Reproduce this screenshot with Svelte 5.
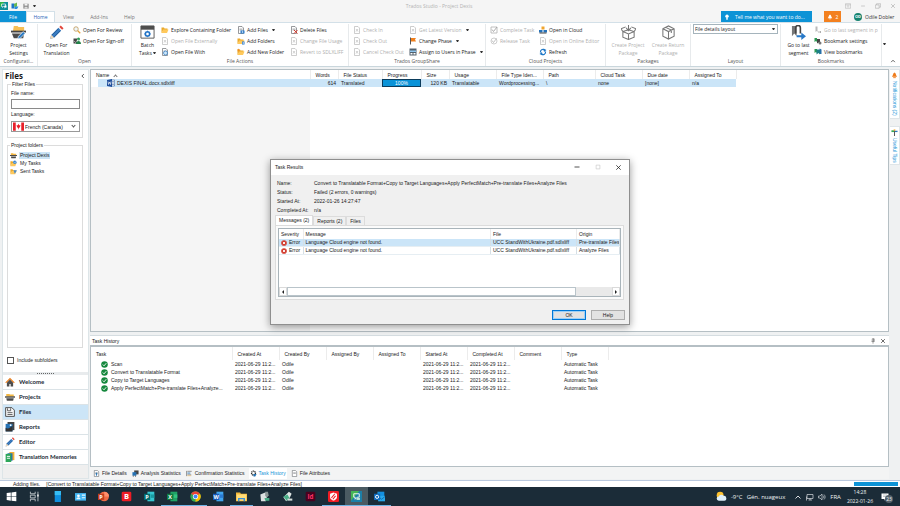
<script lang="ts">
    interface Cmd { icon: string, label: string, off?: boolean, caret?: boolean }
    interface Group { name: string, width: number, big?: Cmd[], cols?: { width: number, items: Cmd[] }[], layout?: boolean }

    const doc = '<path d="M3 1h7l3 3v11H3z" fill="#fff" stroke="#6b6f72" stroke-width="1.4"/><path d="M5 6h6M5 8h6" stroke="#6b6f72"/>';
    const greyDoc = '<path d="M3 1h7l3 3v11H3z" fill="#fff" stroke="#a9a9a9" stroke-width="1.4"/><path d="M6 6l4 5M10 6l-4 5" stroke="#a9a9a9" stroke-width="1.3"/>';
    const folder = '<path d="M1 3h5l1 2h6v3H5l-4 6z" fill="#e9a92c"/><path d="M4 7h11l-3 7H1z" fill="#ffc95c"/>';
    const office = (dark: string, mid: string, light: string, ch: string) =>
        `<path d="M5 1h10v14H5z" fill="${light}"/><path d="M10 5h5v5h-5z" fill="${mid}"/><path d="M0 4h9v9H0z" fill="${dark}"/><text x="4.5" y="11.4" font-size="8" font-weight="700" text-anchor="middle" fill="#fff">${ch}</text>`;
    const tile = (bg: string, fg: string, ch: string, size: number) =>
        `<rect x="1" y="1" width="14" height="14" rx="2" fill="${bg}"/><text x="8" y="12" font-size="${size}" font-weight="700" text-anchor="middle" fill="${fg}">${ch}</text>`;

    const icons: Record<string, string> = {
        app: '<path d="M0 0h16v16H0z" fill="#0f8f9a"/><path d="M0 0h9L0 11z" fill="#2db34a"/><path d="M3 4h8v5H7l-2 2V9H3z" fill="none" stroke="#fff" stroke-width="1.3"/><path d="M9 7h4v4h-2l-2 2z" fill="#fff"/>',
        open: '<path d="M1 3h6v10H1z" fill="#1c75c8"/><path d="M6 4l6-3v8l-5 2z" fill="#68b84d"/><path d="M8 9h7l-3 5H7z" fill="#2a8fe0"/>',
        save: '<path d="M1 2h14v13H1z" fill="#888"/><path d="M4 2h8v5H4z" fill="#f5f5f5"/><path d="M4 10h8v5H4z" fill="#ddd"/>',
        settings: '<path d="M3 1h4l1 1h6v5H2z" fill="#f7bf55"/><path d="M0 6h16v2H0z" fill="#444"/><path d="M1 9h13l-1 5H3z" fill="#4b4b4b"/><path d="M7 15l1-3 5-5 2 2-5 5z" fill="#2d7cc4" stroke="#fff" stroke-width=".7"/>',
        pencil: '<path d="M1 15l1.5-4.5L10 3l3 3-7.5 7.5z" fill="#3b7fc4"/><path d="M3 11l7-7M5 13l7-7" stroke="#1f4f86" stroke-width=".8"/><path d="M11 2l1.5-1.5 3 3L14 5z" fill="#e2473c"/><path d="M1 15l1.5-4.5 3 3z" fill="#f0d8b8"/>',
        batch: '<path d="M1 1h14v13H1z" fill="#fff" stroke="#555"/><path d="M1 1h14v4H1z" fill="#4e4e4e"/><circle cx="8" cy="9.500" r="2.3" fill="none" stroke="#2374c6" stroke-width="1.700"/><path d="M8 6v7M4.500 9.500h7M5.700 7.200l4.600 4.600M10.300 7.200l-4.600 4.600" stroke="#2374c6" stroke-width=".8"/><circle cx="8" cy="9.500" r="1.300" fill="#fff"/>',
        search: '<circle cx="6" cy="6" r="4.500" fill="#eef6fb" stroke="#b98b3f" stroke-width="1.400"/><path d="M9.500 9.500l5 5" stroke="#e2a23a" stroke-width="2.500"/>',
        signoff: '<path d="M1 3h7v10H1z" fill="#444"/><circle cx="11" cy="4" r="3" fill="#2c9a54"/><path d="M6 14c0-8 10-8 10 0z" fill="#24824a"/><path d="M2 8l3 3 5-6" fill="none" stroke="#fff"/>',
        folder,
        greyDoc,
        doc,
        docWith: doc + '<circle cx="9" cy="10" r="4" fill="#cfe6f7" stroke="#2879c4" stroke-width="1.400"/>',
        addFiles: doc + '<path d="M7 9h8v6H7z" fill="#2374c6"/><path d="M11 10v4M9 12h4" stroke="#fff"/>',
        addFolder: folder + '<path d="M10 9h5v6h-5z" fill="#2374c6"/><path d="M12.500 10v4M11 12h3" stroke="#fff"/>',
        folderNew: folder + '<path d="M3 1l1 2 2 0-1.500 1.500L5 7 3 5.500 1 7l.5-2.500L0 3h2z" fill="#f08b1f"/>',
        docDel: doc + '<path d="M8 8l7 7M15 8l-7 7" stroke="#d33a2c" stroke-width="2"/>',
        flag: '<path d="M3 1v14" stroke="#555" stroke-width="2"/><path d="M4 2h10l-2 3 2 4H4z" fill="#f07f1c"/>',
        assign: '<path d="M1 1h14v14H1z" fill="#52616d"/><path d="M2 5h12v3H2z" fill="#8fc6ee"/><path d="M3 10h4v3H3zM9 10h4v3H9z" fill="#fff"/>',
        tick: '<path d="M2 2h12v12H2z" fill="none" stroke="#999" stroke-width="1.500"/><path d="M4 7l3 4 7-9" fill="none" stroke="#888" stroke-width="1.700"/>',
        release: '<circle cx="8" cy="8" r="6" fill="none" stroke="#aaa" stroke-width="1.400"/><path d="M4 7l3 4 6-8" fill="none" stroke="#999" stroke-width="1.500"/>',
        cloud: '<path d="M5 1h6v6H5z" fill="#f0a52e"/><path d="M0 8h7v5H0zM9 8h7v5H9z" fill="#2572ba"/><path d="M1 14h14" stroke="#444" stroke-width="2"/>',
        refresh: '<path d="M3 9a5 5 0 0 1 8-5M13 7a5 5 0 0 1-8 5" fill="none" stroke="#1f78c8" stroke-width="2.400"/><path d="M9 1l6 3-5 4zM7 15l-6-3 5-4z" fill="#1f78c8"/>',
        boxDown: '<path d="M2 7l6-2 6 2v6l-6 2.500L2 13zM2 7l6 2.500L14 7M8 9.500v6M8 0v5M5.500 3L8 6l2.500-3M2 7L0 4l5-2M14 7l2-3-5-2" fill="none" stroke="#555" stroke-width="1.100"/>',
        box: '<path d="M2 4l6-3 6 3v8l-6 3-6-3zM2 4l6 3 6-3M8 7v8M5 2.500l6 3v3" fill="none" stroke="#555" stroke-width="1.100"/>',
        goLast: '<path d="M1 1h5v11l-2.500-3L1 12z" fill="#777"/><path d="M5 9V3a2.500 2.500 0 0 1 5 0v6" fill="none" stroke="#444" stroke-width="1.700"/><path d="M6 11h5V8l5 4-5 4v-3H6z" fill="#2879c8"/>',
        bmGrey: '<path d="M3 1h4v11l-2-2-2 2z" fill="#aaa"/><path d="M8 12h6M12 10l2 2-2 2" stroke="#888" fill="none" stroke-width="1.500"/>',
        bmSet: '<path d="M1 2h5v8l-2-2-3 2z" fill="#2c9a54"/><path d="M6 4h6v9l-3-2-3 2z" fill="#444"/><circle cx="12" cy="12" r="3" fill="#777"/>',
        bmView: '<path d="M1 2h5v8l-2-2-3 2z" fill="#2c9a54"/><path d="M5 3h7v10l-3-3-4 3z" fill="#1e8086"/><path d="M11 1l4 2v9h-3z" fill="#2870a8"/>',
        bell: '<path d="M8 1c4 2 3 7 6 10H2C5 8 4 3 8 1z" fill="#fff"/><path d="M6 12h4v2H6z" fill="#fff"/>',
        bellOrange: '<path d="M8 1c4 2 3 7 6 10H2C5 8 4 3 8 1z" fill="#ef7b1a"/><path d="M5 12h6v2H5z" fill="#ef7b1a"/>',
        tips: '<path d="M8 3v13" stroke="#444" stroke-width="2"/><path d="M1 3h6v4H1z" fill="#35a853"/><path d="M9 4h6v3H9z" fill="#2b77bd"/><path d="M6 1h4v3H6z" fill="#f2a82c"/>',
        bulb: '<circle cx="8" cy="6" r="4.500" fill="#fff"/><path d="M6 10h4v5H6z" fill="#fff"/>',
        word: '<path d="M8 2h7v12H8z" fill="#fff" stroke="#2b5797"/><path d="M10 5h4M10 8h4M10 11h4" stroke="#2b5797"/><path d="M0 2l10-2v16L0 14z" fill="#1f4e9c"/><path d="M2 5l1 6 2-5 2 5 1-6" fill="none" stroke="#fff" stroke-width="1.300"/>',
        canada: '<path d="M0 2h16v12H0z" fill="#fff"/><path d="M0 2h4v12H0zM12 2h4v12h-4z" fill="#e8202a"/><path d="M8 4l1 2 2 0-1 3-1.500 1v2h-1v-2L6 9 5 6h2z" fill="#e8202a"/>',
        project: '<path d="M2 3h5l1 1h6v3H2z" fill="#f2b743"/><path d="M0 7h16v2H0z" fill="#333"/><path d="M2 10h12l-1 4H3z" fill="#4a4a4a"/>',
        tasks: folder + '<circle cx="11" cy="5" r="4" fill="#3a86cf"/><path d="M9 5l2 2 3-4" stroke="#fff" fill="none"/>',
        sent: folder + '<path d="M8 5h8l-5 8z" fill="#4c8ccb"/>',
        home: '<path d="M8 1l8 8h-3L8 4 3 9H0z" fill="#ee8322"/><path d="M3 9l5-5 5 5v6H9v-4H7v4H3z" fill="#4d4d4d"/>',
        files: '<path d="M1 1h10l4 4v10H1z" fill="#f5f5f5" stroke="#4a4a4a" stroke-width="1.500"/><path d="M4 2v4h5V2M4 9h8M4 12h8" fill="none" stroke="#4a4a4a" stroke-width="1.300"/>',
        reports: '<path d="M4 0h11v13H4z" fill="#444"/><path d="M1 3h11v12H1z" fill="#2572b4"/><path d="M1 15V9c4 3 7 0 11-3v9z" fill="#333"/><circle cx="9" cy="5" r="1.500" fill="#fff"/>',
        tm: '<path d="M7 0h8v13H7z" fill="#f2b036"/><path d="M4 2h8v12H4z" fill="#2572b4"/><path d="M1 3h9v13H1z" fill="#2da65a"/><path d="M3 7h5M3 10h5" stroke="#fff" stroke-width="1.500"/>',
        ok: '<circle cx="8" cy="8" r="7.500" fill="#16883e"/><path d="M4 8l3 3 5-6" fill="none" stroke="#fff" stroke-width="2"/>',
        error: '<circle cx="8" cy="8" r="7.500" fill="#d23b2e"/><path d="M5 5l6 6M11 5l-6 6" stroke="#fff" stroke-width="2.400"/>',
        info: doc + '<path d="M8 6v7M6 9h4" stroke="#2572b4" stroke-width="2"/>',
        stats: '<path d="M5 1h10v9H5z" fill="#444"/><path d="M1 5h9v8H1z" fill="#2572b4"/><path d="M3 13v2M8 13v2" stroke="#333" stroke-width="2"/>',
        bars: '<path d="M1 2v12" stroke="#666" stroke-width="1.500"/><path d="M3 3h10M3 11h9" stroke="#888" stroke-width="2"/><path d="M3 7h7" stroke="#2572b4" stroke-width="2"/><path d="M3 13h9" stroke="#f2b036"/>',
        gear: '<circle cx="8" cy="7" r="4.500" fill="none" stroke="#333" stroke-width="3" stroke-dasharray="2.500 1"/><path d="M8 9h7l-3 6H8z" fill="#2572b4"/>',
        pin: '<path d="M4 9h8M6 9V2h5v7M8 9v6M9.500 2v7" fill="none" stroke="#555" stroke-width="1.500"/>',
        windows: '<path d="M1 3l6-1v5.500H1zM8 2l7-1v6.500H8zM1 8.500h6V14l-6-1zM8 8.500h7V15l-7-1z" fill="#fff"/>',
        taskview: '<path d="M2 1v3h7V1M2 15v-3h7v3M2 6h7v4H2zM13 1v14" fill="none" stroke="#cfd4d8" stroke-width="1.200"/><path d="M12 5h2v3h-2z" fill="#fff"/>',
        phone: '<path d="M4 0h9v16H4z" fill="#0f8ede"/><path d="M4 0h9v6H4z" fill="#36bdf4"/>',
        card: '<path d="M0 3h16v11H0z" fill="#43b5f2"/><circle cx="5" cy="7" r="2" fill="#fff"/><path d="M2 12c0-4 6-4 6 0zM10 5h5v2h-5zM10 9h5v1.500h-5z" fill="#e9f7ff"/>',
        ppt: '<circle cx="9" cy="8" r="7" fill="#ed6c47"/><path d="M9 1a7 7 0 0 1 7 7H9z" fill="#ff8f6b"/><path d="M0 4h9v9H0z" fill="#c43e1c"/><text x="4.500" y="11.400" font-size="8" font-weight="700" text-anchor="middle" fill="#fff">P</text>',
        bold: tile("#ee1c25", "#fff", "B", 11),
        pub: office("#036c70", "#1a9ba1", "#37c6d0", "P"),
        excel: office("#107c41", "#33c481", "#21a366", "X"),
        chrome: '<circle cx="8" cy="8" r="7.500" fill="#34a853"/><path d="M8 8L1.500 4A7.500 7.500 0 0 1 14.500 4z" fill="#ea4335"/><path d="M8 8l6.500-4A7.500 7.500 0 0 1 8 15.500z" fill="#fbbc05"/><circle cx="8" cy="8" r="3.800" fill="#fff"/><circle cx="8" cy="8" r="2.900" fill="#4285f4"/>',
        wordTb: office("#185abd", "#2b7cd3", "#41a5ee", "W"),
        explorer: '<path d="M0 2h6l1 2h9v11H0z" fill="#f5b93a"/><path d="M1 5h14v9H1z" fill="#ffdd7a"/><path d="M3 10h10v5h-2v-3H5v3H3z" fill="#3a8fd6"/>',
        cleaner: '<path d="M2 5l7-3 4 2-3 11H3z" fill="#dde2e2"/><path d="M9 1l4 0 1 5-3 4-2-4z" fill="#8c9797"/><path d="M8 10h7v4H9z" fill="#48ab84"/>',
        cleaner2: '<path d="M2 9l8-8 4 3-3 6-5 5z" fill="#dfe6e4"/><path d="M2 8l6-3 3 6-4 3z" fill="#49ad86"/><path d="M8 11h7v3H8z" fill="#d3ddda"/>',
        indesign: tile("#49021f", "#ff3366", "Id", 9),
        redShield: '<rect x="0" y="0" width="16" height="16" rx="2" fill="#f01c24"/><path d="M8 2l5 2v5c0 3-5 5-5 5s-5-2-5-5V4z" fill="#fff"/><path d="M5 10l5-6M7 12l4-5" stroke="#f01c24" stroke-width="1.500"/>',
        trados: '<path d="M0 0h16v16H0z" fill="#1b7fa8"/><path d="M0 0h12L0 14z" fill="#45b556"/><path d="M4 4h8v5H9l-3 3V9H4z" fill="none" stroke="#fff" stroke-width="1.300"/><path d="M8 10h5v3H8z" fill="#bfe6d8"/>',
        outlook: '<path d="M5 1h10v8H5z" fill="#1490df"/><path d="M6 7h10v8H6z" fill="#28a8ea"/><path d="M6 8l5 4 5-4" stroke="#0a5a9c" fill="none"/><path d="M0 4h9v9H0z" fill="#0f6cbd"/><circle cx="4.500" cy="8.500" r="2.300" fill="none" stroke="#fff" stroke-width="1.400"/>',
        weather: '<circle cx="6" cy="6" r="5" fill="#fdc22f"/><path d="M4 14a3 3 0 0 1 0-6 4 4 0 0 1 7-1 3.500 3.500 0 0 1 1 7z" fill="#dff0fa"/>',
        monitor: '<path d="M2 3h12v8H2zM5 14h7M8 11v3M1 7v8" fill="none" stroke="#e6eaec" stroke-width="1.300"/>',
        speaker: '<path d="M1 6h3l4-4v12l-4-4H1z" fill="none" stroke="#e6eaec" stroke-width="1.200"/><path d="M10 5c2 2 2 4 0 6M12 3c3 3 3 7 0 10" fill="none" stroke="#e6eaec" stroke-width="1.200"/>',
        chevUp: '<path d="M3 11l5-5 5 5" fill="none" stroke="currentColor" stroke-width="1.800"/>',
        chevLeft: '<path d="M10 3L5 8l5 5" fill="none" stroke="currentColor" stroke-width="2"/>',
        note: '<path d="M1 1h14v11h-5l-3 3v-3H1z" fill="#fff"/><path d="M4 4h8M4 7h8" stroke="#8a949b"/>',
        min: '<path d="M3 8h10" stroke="currentColor" stroke-width="1.500"/>',
        max: '<path d="M3 3h10v10H3z" fill="none" stroke="currentColor" stroke-width="1.500"/>',
        restore: '<path d="M1 5h10v9H1zM4 5V2h11v9h-4" fill="none" stroke="currentColor" stroke-width="1.500"/>',
        ribbonOpt: '<path d="M1 2h14v12H1zM1 5h14M8 12V7M6 9l2-2 2 2" fill="none" stroke="currentColor" stroke-width="1.300"/>',
        close: '<path d="M3 3l10 10M13 3L3 13" stroke="currentColor" stroke-width="1.700"/>',
    };

    const groups: Group[] = [
        { name: "Configurati...", width: 38, big: [{ icon: "settings", label: "Project Settings" }] },
        {
            name: "Open", width: 94, big: [{ icon: "pencil", label: "Open For Translation" }],
            cols: [{ width: 56, items: [{ icon: "search", label: "Open For Review" }, { icon: "signoff", label: "Open For Sign-off" }] }]
        },
        {
            name: "File Actions", width: 217, big: [{ icon: "batch", label: "Batch Tasks", caret: true }],
            cols: [
                { width: 76, items: [{ icon: "folder", label: "Explore Containing Folder" }, { icon: "greyDoc", label: "Open File Externally", off: true }, { icon: "docWith", label: "Open File With" }] },
                { width: 53, items: [{ icon: "addFiles", label: "Add Files", caret: true }, { icon: "addFolder", label: "Add Folders" }, { icon: "folderNew", label: "Add New Folder" }] },
                { width: 56, items: [{ icon: "docDel", label: "Delete Files" }, { icon: "greyDoc", label: "Change File Usage", off: true }, { icon: "greyDoc", label: "Revert to SDLXLIFF", off: true }] }
            ]
        },
        {
            name: "Trados GroupShare", width: 137,
            cols: [
                { width: 56, items: [{ icon: "greyDoc", label: "Check In", off: true }, { icon: "greyDoc", label: "Check Out", off: true }, { icon: "greyDoc", label: "Cancel Check Out", off: true }] },
                { width: 74, items: [{ icon: "greyDoc", label: "Get Latest Version", off: true, caret: true }, { icon: "flag", label: "Change Phase", caret: true }, { icon: "assign", label: "Assign to Users in Phase", caret: true }] }
            ]
        },
        {
            name: "Cloud Projects", width: 120,
            cols: [
                { width: 49, items: [{ icon: "tick", label: "Complete Task", off: true }, { icon: "release", label: "Release Task", off: true }] },
                { width: 64, items: [{ icon: "cloud", label: "Open in Cloud" }, { icon: "greyDoc", label: "Open in Online Editor", off: true }, { icon: "refresh", label: "Refresh" }] }
            ]
        },
        { name: "Packages", width: 85, big: [{ icon: "boxDown", label: "Create Project Package", off: true }, { icon: "box", label: "Create Return Package", off: true }] },
        { name: "Layout", width: 90, layout: true },
        {
            name: "Bookmarks", width: 100, big: [{ icon: "goLast", label: "Go to last segment" }],
            cols: [{ width: 66, items: [{ icon: "bmGrey", label: "Go to last segment in p", off: true }, { icon: "bmSet", label: "Bookmark settings" }, { icon: "bmView", label: "View bookmarks" }] }]
        }
    ];

    const fileCols = [["Name", 219], ["Words", 28], ["File Status", 44], ["Progress", 39], ["Size", 28], ["Usage", 47], ["File Type Iden...", 47], ["Path", 52], ["Cloud Task", 47], ["Due date", 47], ["Assigned To", 47]] as [string, number][];
    const histCols = [["Task", 141], ["Created At", 47], ["Created By", 47], ["Assigned By", 47], ["Assigned To", 47], ["Started At", 47], ["Completed At", 47], ["Comment", 47], ["Type", 47]] as [string, number][];
    const history = ["Scan", "Convert to Translatable Format", "Copy to Target Languages", "Apply PerfectMatch+Pre-translate Files+Analyze..."];
    const stamp = "2021-06-29 11:2...";

    const steps = "Convert to Translatable Format+Copy to Target Languages+Apply PerfectMatch+Pre-translate Files+Analyze Files";
    const details = [["Name:", steps], ["Status:", "Failed (2 errors, 0 warnings)"], ["Started At:", "2022-01-26 14:27:47"], ["Completed At:", "n/a"]];
    const origins = ["Pre-translate Files", "Analyze Files"];

    const nav = [["home", "Welcome"], ["project", "Projects"], ["files", "Files"], ["reports", "Reports"], ["pencil", "Editor"], ["tm", "Translation Memories"]];
    const views = [["info", "File Details"], ["stats", "Analysis Statistics"], ["bars", "Confirmation Statistics"], ["gear", "Task History"], ["doc", "File Attributes"]];
    const taskbar = [
        ["windows", "Start"], ["taskview", "Task view"], ["phone", "Your Phone"], ["card", "Contacts"], ["ppt", "PowerPoint"], ["bold", "B"], ["pub", "Publisher"],
        ["excel", "Excel"], ["chrome", "Chrome"], ["wordTb", "Word"], ["explorer", "File Explorer"], ["cleaner", "Tool"], ["cleaner2", "Tool 2"],
        ["indesign", "InDesign"], ["redShield", "Shield"], ["trados", "Trados Studio"], ["outlook", "Outlook"]
    ];
    const running = ["excel", "chrome", "explorer", "redShield", "trados", "outlook"];

    let section = $state("Files");
    let view = $state("Task History");
    let dialogOpen = $state(true);
</script>

{#snippet icon(name: string, cls = "i8")}
    <svg class={cls} viewBox="0 0 16 16" aria-hidden="true">{@html icons[name]}</svg>
{/snippet}

<div class="page">
    <header class="title">
        <div class="quick">
            {@render icon("app")}
            <button aria-label="Open">{@render icon("open")}</button>
            <button aria-label="Save">{@render icon("save", "i6")}</button>
            <button aria-label="Customize"><i class="caret"></i></button>
        </div>
        <span class="name">Trados Studio - Project Dexis</span>
        <div class="winbtns">
            <button aria-label="Ribbon options">{@render icon("ribbonOpt", "i6")}</button>
            <button aria-label="Minimize">{@render icon("min", "i6")}</button>
            <button aria-label="Restore">{@render icon("restore", "i6")}</button>
            <button aria-label="Close">{@render icon("close", "i6")}</button>
        </div>
    </header>

    <nav class="menu">
        <button class="file">File</button>
        <button class="home">Home</button>
        <button class="view">View</button>
        <button class="addins">Add-Ins</button>
        <button class="view">Help</button>
        <button class="tell">{@render icon("bulb", "i6")}<span>Tell me what you want to do...</span></button>
        <button class="alerts">{@render icon("bell", "i6")} 2</button>
        <button class="user"><b>OD</b>Odile Dobler</button>
    </nav>

    <div class="ribbon">
        {#each groups as g}
            <section class="group" class:last={g.name === "Bookmarks"} style="width:{g.width}px">
                <div class="cmds">
                    {#each g.big ?? [] as b}
                        <button class="big" disabled={b.off}>
                            {@render icon(b.icon, "i15")}
                            <span>{b.label}{#if b.caret}&nbsp;<i class="caret"></i>{/if}</span>
                        </button>
                    {/each}
                    {#each g.cols ?? [] as c}
                        <div class="col" style="width:{c.width}px">
                            {#each c.items as b}
                                <button class="small" disabled={b.off}>
                                    {@render icon(b.icon)}<span>{b.label}</span>{#if b.caret}<i class="caret"></i>{/if}
                                </button>
                            {/each}
                        </div>
                    {/each}
                    {#if g.layout}
                        <div class="combo lay">
                            <select aria-label="Layout"><option>File details layout</option></select>
                            <i class="caret"></i>
                        </div>
                    {/if}
                </div>
                <h2>{g.name}</h2>
            </section>
        {/each}
        <div class="more">
            <button aria-label="More commands"><i class="caret"></i></button>
            <button aria-label="Collapse ribbon">{@render icon("chevUp", "i6")}</button>
        </div>
    </div>

    <div class="work">
        <aside class="side">
            <div class="sidehead"><h1>Files</h1><button aria-label="Collapse">{@render icon("chevLeft", "i6")}</button></div>
            <fieldset>
                <legend>Filter Files</legend>
                <label for="fname">File name:</label>
                <input id="fname" type="text" />
                <label for="lang">Language:</label>
                <div class="combo lang">
                    {@render icon("canada", "i11")}
                    <select id="lang"><option>French (Canada)</option></select>
                    <i class="chev"></i>
                </div>
            </fieldset>
            <fieldset class="folders">
                <legend>Project folders</legend>
                <button class="sel">{@render icon("project", "i7")}<span>Project Dexis</span></button>
                <button>{@render icon("tasks", "i7")}<span>My Tasks</span></button>
                <button>{@render icon("sent", "i7")}<span>Sent Tasks</span></button>
            </fieldset>
            <label class="sub"><input type="checkbox" />Include subfolders</label>
            <div class="split"></div>
            <nav class="sections">
                {#each nav as [ic, label]}
                    <button class:on={section === label} onclick={() => section = label}>{@render icon(ic, "i10")}{label}</button>
                {/each}
            </nav>
        </aside>

        <main>
            <section class="panel filelist">
                <table>
                    <colgroup>{#each fileCols as [, w]}<col style="width:{w}px" />{/each}</colgroup>
                    <thead>
                        <tr>{#each fileCols as [c]}<th>{c}{#if c === "Name"}<i class="sort"></i>{/if}</th>{/each}</tr>
                    </thead>
                    <tbody>
                        <tr>
                            <td class="fname"><span>{@render icon("word")}DEXIS FINAL.docx.sdlxliff</span></td>
                            <td class="num">614</td>
                            <td>Translated</td>
                            <td class="prog"><div>100%</div></td>
                            <td class="num">120 KB</td>
                            <td>Translatable</td>
                            <td>Wordprocessing...</td>
                            <td>\</td>
                            <td>none</td>
                            <td>[none]</td>
                            <td>n/a</td>
                        </tr>
                    </tbody>
                </table>
                <div class="namefill"></div>
            </section>

            <section class="hist">
                <div class="histhead">
                    <h2>Task History</h2>
                    <button aria-label="Pin">{@render icon("pin", "i6")}</button>
                    <button aria-label="Close panel">{@render icon("close", "i6")}</button>
                </div>
                <div class="panel">
                    <table>
                        <colgroup>{#each histCols as [, w]}<col style="width:{w}px" />{/each}</colgroup>
                        <thead><tr>{#each histCols as [c]}<th>{c}</th>{/each}</tr></thead>
                        <tbody>
                            {#each history as task}
                                <tr>
                                    <td class="task"><span>{@render icon("ok", "i7")}{task}</span></td>
                                    <td>{stamp}</td>
                                    <td>Odile</td>
                                    <td></td>
                                    <td></td>
                                    <td>{stamp}</td>
                                    <td>{stamp}</td>
                                    <td></td>
                                    <td>Automatic Task</td>
                                </tr>
                            {/each}
                        </tbody>
                    </table>
                </div>
            </section>

            <div class="views">
                {#each views as [ic, label]}
                    <button class:on={view === label} onclick={() => view = label}>{@render icon(ic, "i7")}{label}</button>
                {/each}
            </div>
        </main>

        <aside class="rail">
            <button>{@render icon("bellOrange", "i7")}Notifications (2)</button>
            <button>{@render icon("tips", "i7")}Useful Tips</button>
        </aside>
    </div>

    <footer class="status">
        <span>Adding files.</span>
        <span>[{steps}]</span>
        <div class="bar"></div>
    </footer>

    <footer class="taskbar">
        {#each taskbar as [ic, label]}
            <button class="app" class:run={running.includes(ic)} class:active={ic === "trados"} aria-label={label}>{@render icon(ic, "i11")}</button>
        {/each}
        <div class="tray">
            {@render icon("weather", "i11")}
            <span>-9°C</span>
            <span>Gén. nuageux</span>
            <button aria-label="Hidden icons">{@render icon("chevUp")}</button>
            {@render icon("monitor")}
            {@render icon("speaker")}
            <span>FRA</span>
            <time>14:28<br />2022-01-26</time>
            <button class="notes" aria-label="Notifications">{@render icon("note")}<b>23</b></button>
        </div>
    </footer>

    {#if dialogOpen}
        <div class="overlay">
            <div class="dialog" role="dialog" aria-labelledby="dlg">
                <div class="dlgtitle">
                    <h2 id="dlg">Task Results</h2>
                    <button aria-label="Minimize">{@render icon("min")}</button>
                    <button aria-label="Maximize" disabled>{@render icon("max", "i6")}</button>
                    <button aria-label="Close" onclick={() => dialogOpen = false}>{@render icon("close", "i7")}</button>
                </div>
                <div class="dlgbody">
                    <dl>
                        {#each details as [k, v]}<dt>{k}</dt><dd>{v}</dd>{/each}
                    </dl>
                    <div class="tabs">
                        <button class="on">Messages (2)</button>
                        <button>Reports (2)</button>
                        <button>Files</button>
                    </div>
                    <div class="tabpage">
                        <div class="grid">
                            <table>
                                <colgroup><col class="c1" /><col class="c2" /><col class="c3" /><col class="c4" /></colgroup>
                                <thead><tr><th>Severity</th><th>Message</th><th>File</th><th>Origin</th></tr></thead>
                                <tbody>
                                    {#each origins as origin, i}
                                        <tr class:on={i === 0}>
                                            <td><span class="err">{@render icon("error", "i6")}Error</span></td>
                                            <td>Language Cloud engine not found.</td>
                                            <td>UCC StandWithUkraine.pdf.sdlxliff</td>
                                            <td>{origin}</td>
                                        </tr>
                                    {/each}
                                </tbody>
                            </table>
                            <div class="scroll">
                                <button aria-label="Scroll left"><i class="tri l"></i></button>
                                <div class="thumb"></div>
                                <button aria-label="Scroll right"><i class="tri r"></i></button>
                            </div>
                        </div>
                    </div>
                    <div class="actions">
                        <button class="ok" onclick={() => dialogOpen = false}>OK</button>
                        <button>Help</button>
                    </div>
                </div>
            </div>
        </div>
    {/if}
</div>

<style>
    :global(body) {margin:0;}
    .page {position:relative;display:flex;flex-direction:column;min-height:100vh;background:#eff1f2;color:#1a1a1a;font:5px/8px "Liberation Sans", Arial, sans-serif;overflow:hidden;box-sizing:border-box;}
    .page *, .page *::before {box-sizing:border-box;}
    button, input, select {font:inherit;color:inherit;}
    button {display:flex;align-items:center;padding:0;border:0;background:none;text-align:left;white-space:nowrap;}
    h1, h2, dl, dd, fieldset {margin:0;padding:0;font-weight:400;font-size:inherit;}
    svg {display:block;flex:none;}
    .i6 {width:6px;height:6px;}
    .i7 {width:7px;height:7px;}
    .i8 {width:8px;height:8px;}
    .i10 {width:10px;height:10px;}
    .i11 {width:11px;height:11px;}
    .i15 {width:15px;height:15px;}
    .caret {display:inline-block;flex:none;border:1px solid transparent;border-top:2px solid #333;border-bottom:0;width:3px;height:2px;}

    /* window chrome */
    .title, .menu, .ribbon {font-family:"Open Sans", "Noto Sans", sans-serif;}
    .title {display:flex;align-items:center;justify-content:space-between;height:11px;background:#f5f5f5;color:#aaa;}
    .title > div {flex:1;display:flex;align-items:center;}
    .quick {gap:3px;}
    .quick button {margin-right:1px;}
    .winbtns {justify-content:flex-end;gap:9px;padding-right:4px;}
    .title .name {color:#b3b3b3;padding-right:18px;}
    .menu {display:flex;align-items:stretch;height:11px;background:#f5f5f5;color:#777;}
    .menu button {justify-content:center;}
    .menu .view {width:27px;}
    .menu .addins {width:34px;}
    .menu .file {width:26px;background:#0d93d6;color:#fff;}
    .menu .home {width:29px;background:#fff;color:#2a66b8;border:1px solid #d3e0e8;border-bottom:0;}
    .menu .tell {width:91px;margin-left:auto;background:#0d93d6;color:#fff;justify-content:flex-start;padding-left:3px;gap:5px;}
    .menu .alerts {width:17px;margin:0 13px 0 12px;background:#f3801f;color:#fff;gap:3px;}
    .menu .user {width:45px;margin-right:1px;color:#333;gap:3px;justify-content:flex-start;}
    .user b {width:8px;height:8px;border-radius:50%;background:#16836f;color:#fff;font-size:4px;text-align:center;}

    .ribbon {display:flex;height:45px;background:#fff;border-top:1px solid #d3e0e8;border-bottom:1px solid #c9d6dc;padding-top:1px;}
    .group {display:flex;flex:none;flex-direction:column;border-right:1px solid #e7eaec;overflow:hidden;}
    .group.last {flex:1;}
    .group h2 {line-height:9px;text-align:center;color:#555;}
    .cmds {display:flex;flex:1;justify-content:flex-end;padding:0 2px;}
    .last .cmds {justify-content:flex-start;}
    .col {flex:none;}
    .small {height:11px;gap:2px;width:100%;}
    .small .caret {margin-left:2px;}
    .big {flex:1;flex-direction:column;padding-top:1px;}
    .big span {text-align:center;white-space:normal;margin-top:1px;}
    .last .big {flex:none;width:31px;}
    .big .caret {vertical-align:1px;}
    button:disabled {color:#b0b0b0;}
    button:disabled svg {opacity:.8;}
    .combo {display:flex;align-items:center;border:1px solid #a5b4bc;background:#fff;}
    .combo select {appearance:none;flex:1;min-width:0;height:100%;border:0;padding:0;background:none;}
    .lay {width:100%;height:10px;padding:0 2px 0 1px;}
    .more {display:flex;flex-direction:column;justify-content:space-between;width:18px;padding:19px 4px 2px 1px;}
    .more button:last-child {align-self:flex-end;}

    /* left side */
    .work {flex:1;display:flex;gap:1px;padding:2px 0 1px 2px;border-bottom:1px solid #b9c8de;}
    .side {display:flex;flex-direction:column;width:87px;background:#fff;border:1px solid #dde5e8;}
    .sidehead {display:flex;align-items:center;justify-content:space-between;height:11px;padding:0 2px;}
    .sidehead h1 {font:700 8px/10px "Open Sans", sans-serif;}
    fieldset {min-width:0;margin:0 5px 4px 4px;border:1px solid #dcdcdc;padding:2px 2px 5px 3px;}
    legend {margin-left:0;padding:0 1px;line-height:6px;}
    fieldset label {display:block;}
    #fname {display:block;width:100%;height:10px;margin:2px 0 1px;border:1px solid #8a8a8a;padding:0 2px;background:#fff;}
    .lang {height:11px;margin-top:3px;padding:0 2px 0 1px;gap:1px;border-color:#999;}
    .chev {width:3px;height:3px;margin:0 2px 2px 0;border:solid #555;border-width:0 1px 1px 0;transform:rotate(45deg);}
    .folders {flex:1;padding:3px 2px;margin-bottom:0;}
    .folders button {gap:2px;height:8px;}
    .folders span {padding:0 1px;line-height:7px;}
    .sel span {background:#cbe4f6;}
    .sub {display:flex;align-items:center;gap:3px;height:24px;padding-left:4px;}
    .sub input {appearance:none;width:7px;height:7px;margin:0;border:1px solid #555;background:#fff;}
    .split {height:3px;background:#e8ebed;text-align:center;}
    .split::before {content:"";display:block;width:17px;margin:0 auto;border-top:1px dotted #666;transform:translateY(1px);}
    .sections {background:#efefef;padding-bottom:13px;}
    .sections button {width:100%;height:15px;gap:4px;padding-left:2px;border-bottom:1px solid #dbe3e7;background:#fff;font:700 6px/8px Lato, sans-serif;color:#1c2b36;}
    .sections .on {background:#cce5f7;}

    /* tables */
    main {flex:1;display:flex;flex-direction:column;min-width:0;}
    .panel {background:#fff;border:1px solid #b5bfc4;overflow:hidden;}
    table {table-layout:fixed;border-collapse:collapse;width:0;}
    th, td {padding:0 0 0 3px;text-align:left;font-weight:400;white-space:nowrap;overflow:hidden;}
    th {padding-left:5px;border-right:1px solid #ececec;}
    td.num {text-align:right;padding-right:2px;}
    td span {display:flex;align-items:center;}
    .filelist {flex:2;display:flex;flex-direction:column;}
    .filelist table {background:#fff;}
    .filelist th {height:9px;}
    .filelist tbody tr {background:linear-gradient(90deg, #fff 7px, #cbe5f8 7px);}
    .filelist td {height:8px;}
    .fname span {gap:2px;padding-left:13px;}
    .filelist .prog {padding:0;}
    .prog div {background:#0a93d8;border:1px solid #0b3c5c;color:#fff;line-height:6px;text-align:center;}
    .sort {display:inline-block;width:3px;height:3px;margin-left:5px;border:solid #777;border-width:1px 0 0 1px;transform:translateY(1px) rotate(45deg);}
    .namefill {flex:1;width:219px;background:#f5f5f5;}
    .hist {flex:1;display:flex;flex-direction:column;margin-top:3px;border-top:1px solid #d5dde1;}
    .histhead {display:flex;align-items:center;gap:4px;height:9px;padding:0 3px 0 2px;background:#fff;}
    .histhead h2 {flex:1;}
    .hist .panel {flex:1;border-top-width:2px;}
    .hist thead th {height:13px;}
    .hist tbody td {height:8px;}
    .task span {gap:3px;padding-left:7px;}
    .views {display:flex;align-items:center;gap:3px;height:12px;padding-left:2px;background:#f3f4f4;}
    .views button {gap:2px;height:11px;padding:0 1px;}
    .views .on {background:#fff;color:#1b95d8;}

    .rail {width:10px;background:#eff1f2;}
    .rail button {writing-mode:vertical-rl;width:10px;margin-bottom:7px;padding:2px 0;gap:2px;background:#fff;border:1px solid #dfe5e8;border-left:0;color:#1b95d8;}

    /* bottom */
    .status {display:flex;height:6px;padding:0 2px 0 13px;gap:6px;background:#fff;line-height:6px;}
    .status .bar {width:44px;height:4px;margin:1px 0 0 auto;background:#0d93d6;}
    .taskbar {display:flex;height:19px;background:#1b2c38;color:#eef1f3;font:6px/8px "Open Sans", "Noto Sans", sans-serif;}
    .app {justify-content:center;width:23px;border-bottom:1px solid transparent;}
    .app.run {border-color:#6fb4e6;}
    .app.active {background:#4a5a62;}
    .tray {display:flex;align-items:center;gap:4px;margin-left:auto;padding-right:7px;}
    .tray button {margin-left:5px;}
    .tray time {margin-left:2px;font-size:5px;line-height:9px;text-align:center;}
    .tray .notes {position:relative;margin:0 0 0 4px;width:12px;}
    .notes b {position:absolute;left:4px;top:2px;width:8px;height:8px;border-radius:50%;background:#55616a;font-size:5px;font-weight:400;text-align:center;}

    /* dialog */
    .overlay {position:absolute;inset:0 0 22px;display:grid;place-items:center;pointer-events:none;}
    .dialog {width:40%;min-width:360px;border:1px solid #8f8f8f;background:#f0f0f0;box-shadow:0 2px 8px rgba(0,0,0,.4);pointer-events:auto;}
    .dlgtitle {display:flex;align-items:center;gap:14px;height:15px;padding:0 7px 0 4px;background:#fff;}
    .dlgtitle h2 {flex:1;}
    .dlgbody {padding:4px;}
    dl {display:grid;grid-template-columns:37px 1fr;line-height:9px;padding-left:2px;}
    .tabs {display:flex;align-items:flex-end;}
    .tabs button {height:9px;padding:0 3px;border:1px solid #dcdcdc;border-bottom:0;}
    .tabs .on {height:10px;background:#fff;}
    .tabpage {background:#fbfbfb;border:1px solid #dcdcdc;padding:2px;margin-right:1px;}
    .grid {border:1px solid #a9b4ba;background:#fff;overflow:hidden;}
    .grid table {width:100%;}
    .grid th {height:10px;padding-left:2px;}
    .grid td {height:8px;line-height:7px;padding-left:2px;border-right:1px solid #d5dfe5;border-bottom:1px solid #e6eef3;}
    .grid .on {background:#cbe5f8;}
    .c1 {width:24px;}
    .c3 {width:86px;}
    .c4 {width:43px;}
    .err {gap:2px;}
    .scroll {display:flex;height:9px;margin-top:32px;background:#e9e9e9;}
    .scroll button {width:8px;justify-content:center;background:#fff;border:1px solid #dadada;}
    .thumb {flex:1;margin-right:36px;background:#fff;border:1px solid #b9c4ca;}
    .tri {border:2px solid transparent;}
    .tri.l {border-right-color:#222;border-left:0;}
    .tri.r {border-left-color:#222;border-right:0;}
    .actions {display:flex;justify-content:flex-end;gap:5px;margin-top:10px;}
    .actions button {justify-content:center;width:34px;height:10px;background:#e2e2e2;border:1px solid #adadad;}
    .actions .ok {border-color:#0078d7;outline:1px solid #9fd0f5;outline-offset:-2px;}
</style>
